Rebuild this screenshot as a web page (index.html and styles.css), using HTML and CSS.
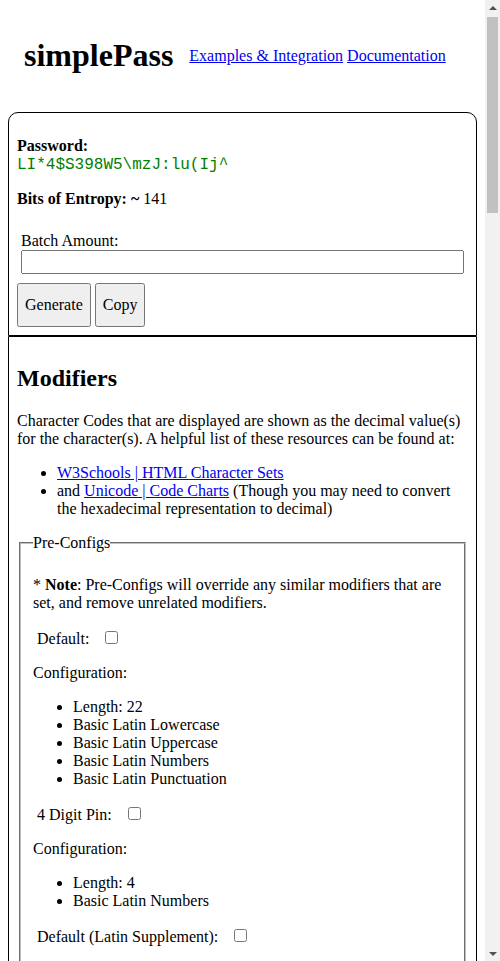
FILE: index.html
```html
<!DOCTYPE html>
<html lang="en">
<head>
<meta charset="utf-8">
<title>simplePass</title>
<link rel="stylesheet" href="styles.css">
</head>
<body>
<header class="header">
  <h1 class="title">simplePass</h1>
  <nav class="nav"><a class="nav-link" href="#examples">Examples &amp; Integration</a> <a class="nav-link" href="#docs">Documentation</a></nav>
</header>

<main>
<section class="card card-top">
  <p class="para"><b>Password:</b><br><span class="password">LI*4$S398W5\mzJ:lu(Ij^</span></p>
  <p class="para"><b>Bits of Entropy: ~</b> 141</p>
  <div class="batch">
    <label class="batch-label" for="batch">Batch Amount:</label>
    <input class="batch-input" id="batch" type="text">
  </div>
  <div class="actions">
    <button class="btn" type="button">Generate</button>
    <button class="btn" type="button">Copy</button>
  </div>
</section>

<section class="card card-bottom">
  <h2 class="heading">Modifiers</h2>
  <p class="para">Character Codes that are displayed are shown as the decimal value(s) for the character(s). A helpful list of these resources can be found at:</p>
  <ul class="list">
    <li><a class="link" href="#w3">W3Schools | HTML Character Sets</a></li>
    <li>and <a class="link" href="#unicode">Unicode | Code Charts</a> (Though you may need to convert the hexadecimal representation to decimal)</li>
  </ul>

  <fieldset class="group">
    <legend class="legend">Pre-Configs</legend>
    <p class="para">* <b>Note</b>: Pre-Configs will override any similar modifiers that are set, and remove unrelated modifiers.</p>

    <p class="option"><label class="opt-label" for="pc1">Default:</label><input class="check" id="pc1" type="checkbox"></p>
    <p class="para">Configuration:</p>
    <ul class="list">
      <li>Length: 22</li>
      <li>Basic Latin Lowercase</li>
      <li>Basic Latin Uppercase</li>
      <li>Basic Latin Numbers</li>
      <li>Basic Latin Punctuation</li>
    </ul>

    <p class="option"><label class="opt-label" for="pc2">4 Digit Pin:</label><input class="check" id="pc2" type="checkbox"></p>
    <p class="para">Configuration:</p>
    <ul class="list">
      <li>Length: 4</li>
      <li>Basic Latin Numbers</li>
    </ul>

    <p class="option"><label class="opt-label" for="pc3">Default (Latin Supplement):</label><input class="check" id="pc3" type="checkbox"></p>
    <p class="para">Configuration:</p>
    <ul class="list">
      <li>Length: 22</li>
      <li>Basic Latin Lowercase</li>
      <li>Basic Latin Uppercase</li>
      <li>Basic Latin Numbers</li>
      <li>Basic Latin Punctuation</li>
      <li>Latin-1 Supplement Lowercase</li>
      <li>Latin-1 Supplement Uppercase</li>
      <li>Latin-1 Supplement Punctuation</li>
    </ul>

    <p class="option"><label class="opt-label" for="pc4">6 Digit Pin:</label><input class="check" id="pc4" type="checkbox"></p>
    <p class="para">Configuration:</p>
    <ul class="list">
      <li>Length: 6</li>
      <li>Basic Latin Numbers</li>
    </ul>

    <p class="option"><label class="opt-label" for="pc5">Passphrase Friendly:</label><input class="check" id="pc5" type="checkbox"></p>
    <p class="para">Configuration:</p>
    <ul class="list">
      <li>Length: 32</li>
      <li>Basic Latin Lowercase</li>
      <li>Basic Latin Uppercase</li>
      <li>Basic Latin Numbers</li>
    </ul>
  </fieldset>

  <fieldset class="group">
    <legend class="legend">Length</legend>
    <p class="option"><label class="opt-label" for="len">Password Length:</label><input class="num" id="len" type="number" value="22"></p>
    <p class="para">* <b>Note</b>: A length of at least 16 characters is recommended.</p>
  </fieldset>

  <fieldset class="group">
    <legend class="legend">Basic Latin</legend>
    <p class="option"><label class="opt-label" for="bl1">Lowercase (97 - 122):</label><input class="check" id="bl1" type="checkbox"></p>
    <p class="option"><label class="opt-label" for="bl2">Uppercase (65 - 90):</label><input class="check" id="bl2" type="checkbox"></p>
    <p class="option"><label class="opt-label" for="bl3">Numbers (48 - 57):</label><input class="check" id="bl3" type="checkbox"></p>
    <p class="option"><label class="opt-label" for="bl4">Punctuation (33 - 47, 58 - 64, 91 - 96, 123 - 126):</label><input class="check" id="bl4" type="checkbox"></p>
    <p class="option"><label class="opt-label" for="bl5">Space (32):</label><input class="check" id="bl5" type="checkbox"></p>
  </fieldset>

  <fieldset class="group">
    <legend class="legend">Latin-1 Supplement</legend>
    <p class="option"><label class="opt-label" for="ls1">Lowercase (223 - 246, 248 - 255):</label><input class="check" id="ls1" type="checkbox"></p>
    <p class="option"><label class="opt-label" for="ls2">Uppercase (192 - 214, 216 - 222):</label><input class="check" id="ls2" type="checkbox"></p>
    <p class="option"><label class="opt-label" for="ls3">Punctuation (161 - 191, 215, 247):</label><input class="check" id="ls3" type="checkbox"></p>
  </fieldset>

  <fieldset class="group">
    <legend class="legend">Latin Extended-A</legend>
    <p class="option"><label class="opt-label" for="la1">Lowercase (257 - 383, odd values):</label><input class="check" id="la1" type="checkbox"></p>
    <p class="option"><label class="opt-label" for="la2">Uppercase (256 - 382, even values):</label><input class="check" id="la2" type="checkbox"></p>
  </fieldset>

  <fieldset class="group">
    <legend class="legend">Latin Extended-B</legend>
    <p class="option"><label class="opt-label" for="lb1">Lowercase:</label><input class="check" id="lb1" type="checkbox"></p>
    <p class="option"><label class="opt-label" for="lb2">Uppercase:</label><input class="check" id="lb2" type="checkbox"></p>
  </fieldset>

  <fieldset class="group">
    <legend class="legend">Greek and Coptic</legend>
    <p class="option"><label class="opt-label" for="gr1">Lowercase (945 - 969):</label><input class="check" id="gr1" type="checkbox"></p>
    <p class="option"><label class="opt-label" for="gr2">Uppercase (913 - 937):</label><input class="check" id="gr2" type="checkbox"></p>
  </fieldset>

  <fieldset class="group">
    <legend class="legend">Cyrillic</legend>
    <p class="option"><label class="opt-label" for="cy1">Lowercase (1072 - 1103):</label><input class="check" id="cy1" type="checkbox"></p>
    <p class="option"><label class="opt-label" for="cy2">Uppercase (1040 - 1071):</label><input class="check" id="cy2" type="checkbox"></p>
  </fieldset>

  <fieldset class="group">
    <legend class="legend">Symbols</legend>
    <p class="option"><label class="opt-label" for="sy1">Currency Symbols (8352 - 8383):</label><input class="check" id="sy1" type="checkbox"></p>
    <p class="option"><label class="opt-label" for="sy2">Arrows (8592 - 8703):</label><input class="check" id="sy2" type="checkbox"></p>
    <p class="option"><label class="opt-label" for="sy3">Mathematical Operators (8704 - 8959):</label><input class="check" id="sy3" type="checkbox"></p>
    <p class="option"><label class="opt-label" for="sy4">Box Drawing (9472 - 9599):</label><input class="check" id="sy4" type="checkbox"></p>
    <p class="option"><label class="opt-label" for="sy5">Geometric Shapes (9632 - 9727):</label><input class="check" id="sy5" type="checkbox"></p>
  </fieldset>

  <fieldset class="group">
    <legend class="legend">Custom</legend>
    <p class="para">Enter the decimal character codes to include, separated by commas.</p>
    <p class="option"><label class="opt-label" for="inc">Include:</label><input class="text" id="inc" type="text"></p>
    <p class="para">Enter the decimal character codes to exclude, separated by commas.</p>
    <p class="option"><label class="opt-label" for="exc">Exclude:</label><input class="text" id="exc" type="text"></p>
  </fieldset>

  <fieldset class="group">
    <legend class="legend">Rules</legend>
    <p class="option"><label class="opt-label" for="r1">No repeating characters:</label><input class="check" id="r1" type="checkbox"></p>
    <p class="option"><label class="opt-label" for="r2">No sequential characters:</label><input class="check" id="r2" type="checkbox"></p>
    <p class="option"><label class="opt-label" for="r3">Must begin with a letter:</label><input class="check" id="r3" type="checkbox"></p>
    <p class="option"><label class="opt-label" for="r4">At least one of each selected set:</label><input class="check" id="r4" type="checkbox"></p>
    <p class="option"><label class="opt-label" for="r5">Exclude similar characters (i, l, 1, L, o, 0, O):</label><input class="check" id="r5" type="checkbox"></p>
    <p class="option"><label class="opt-label" for="r6">Exclude ambiguous characters ({ } [ ] ( ) / \ ' " ` ~ , ; : . &lt; &gt;):</label><input class="check" id="r6" type="checkbox"></p>
  </fieldset>

  <h2 class="heading">Output</h2>
  <p class="para">Generated passwords are never stored or sent anywhere. Everything is created locally in your browser using the Web Crypto API.</p>
  <ul class="list">
    <li>Batch output is separated by new lines</li>
    <li>Copy places the full output on the clipboard</li>
    <li>Entropy is estimated from the size of the selected character pool and the length</li>
  </ul>
</section>
</main>

<div class="scrollbar" aria-hidden="true">
  <div class="sb-btn"><span class="sb-arrow-up"></span></div>
  <div class="sb-track"><div class="sb-thumb"></div></div>
  <div class="sb-btn"><span class="sb-arrow-down"></span></div>
</div>
</body>
</html>
```

FILE: styles.css
```css
html {
  background: #fff;
}

body {
  margin: 8px 23px 8px 8px;
  font-family: "Liberation Serif", "Times New Roman", serif;
  font-size: 16px;
  color: #000;
}

.header {
  display: flex;
  align-items: center;
  padding: 8px 16px;
}

.title {
  font-size: 32px;
  font-weight: bold;
  margin: 21.44px 0;
}

.nav {
  margin-left: 16px;
}

.nav-link,
.link {
  color: #0000ee;
  text-decoration: underline;
}

.card {
  border: 1px solid #000;
  padding: 8px;
}

.card-top {
  margin-top: 8px;
  border-radius: 10px 10px 0 0;
}

.card-bottom {
  border-radius: 0 0 10px 10px;
}

.para {
  margin: 16px 0;
}

.password {
  font-family: "Liberation Mono", "Courier New", monospace;
  font-size: 16px;
  color: #008000;
}

.batch {
  padding: 8px 4px 4px;
}

.batch-label {
  display: block;
}

.batch-input {
  display: block;
  box-sizing: border-box;
  width: 100%;
  font-family: "Liberation Serif", "Times New Roman", serif;
  font-size: 16px;
  margin: 0;
}

.actions {
  display: flex;
  gap: 4px;
  margin-top: 5px;
}

.btn {
  font-family: "Liberation Serif", "Times New Roman", serif;
  font-size: 16px;
  padding: 11px 6px;
  margin: 0;
}

.heading {
  font-size: 24px;
  font-weight: bold;
  margin: 19.92px 0;
}

.list {
  margin: 16px 0;
  padding-left: 40px;
}

.group {
  margin: 16px 2px;
  padding: 8.6px 12px 10px;
  border: 2px groove rgb(192, 192, 192);
}

.group:first-of-type {
  margin-top: 0;
}

.legend {
  padding: 0;
}

.option {
  margin: 16px 0;
  padding-left: 4px;
}

.opt-label {
  margin-right: 12px;
}

.num,
.text {
  font-family: "Liberation Serif", "Times New Roman", serif;
  font-size: 16px;
}

.scrollbar {
  position: fixed;
  top: 0;
  right: 0;
  width: 15px;
  height: 100vh;
  display: flex;
  flex-direction: column;
  background: #f1f1f1;
}

.sb-btn {
  height: 15px;
  display: flex;
  align-items: center;
  justify-content: center;
  flex: none;
}

.sb-arrow-up {
  width: 0;
  height: 0;
  border-left: 4px solid transparent;
  border-right: 4px solid transparent;
  border-bottom: 4px solid #505050;
}

.sb-arrow-down {
  width: 0;
  height: 0;
  border-left: 4px solid transparent;
  border-right: 4px solid transparent;
  border-top: 4px solid #505050;
}

.sb-track {
  flex: 1;
  padding: 2px 2px 0;
}

.sb-thumb {
  height: 196px;
  background: #c1c1c1;
}
```
